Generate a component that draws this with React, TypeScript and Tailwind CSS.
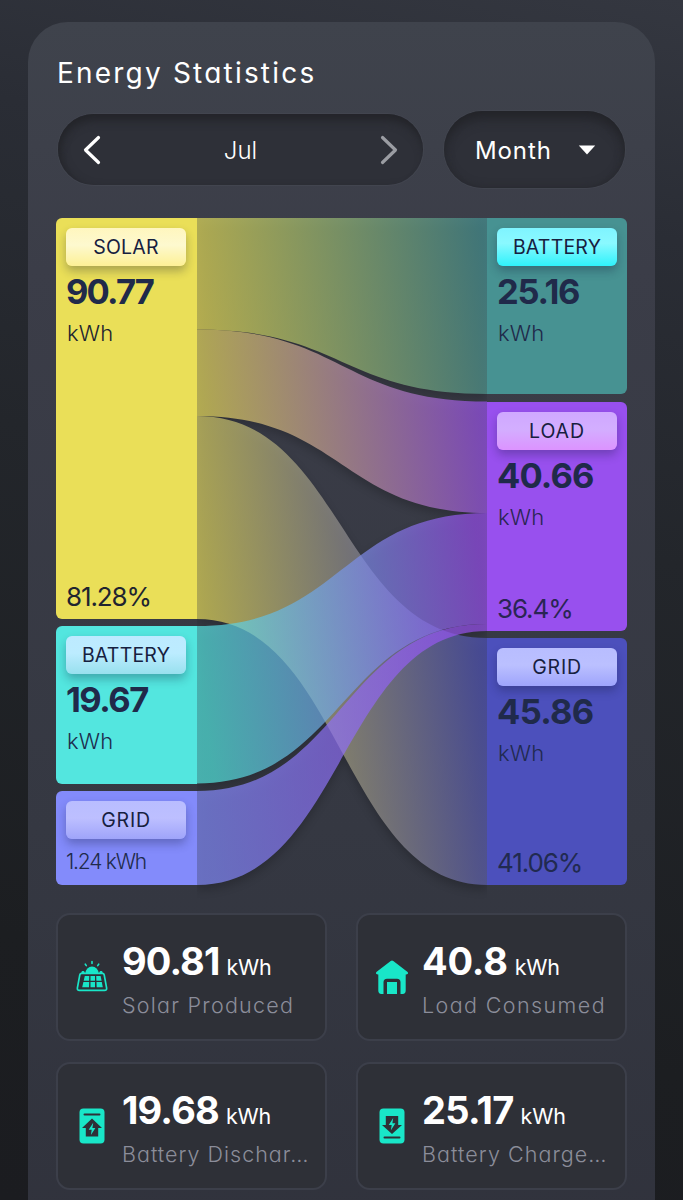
import type { ReactNode } from 'react';

type NodeProps = {
  label: string;
  value: string;
  percent?: string;
  box: string;
  badge: string;
  valueTracking: string;
  labelTracking: string;
  tone: string;
};

function Badge({ label, className, tracking }: { label: string; className: string; tracking: string }) {
  return (
    <div
      className={`flex h-[38px] w-[120px] shrink-0 items-center justify-center rounded-md pt-[2px] text-[19.5px] leading-none text-[#16203f] shadow-[0_5px_10px_rgba(20,25,60,0.3)] ${className}`}
    >
      <span className={tracking}>{label}</span>
    </div>
  );
}

function FlowNode({ label, value, percent, box, badge, valueTracking, labelTracking, tone }: NodeProps) {
  return (
    <div className={`flex flex-col overflow-hidden px-[10px] pt-[10px] ${box} ${tone}`}>
      <Badge label={label} className={badge} tracking={labelTracking} />
      <div className={`mt-[3px] h-11 text-[34.5px] leading-[46px] font-bold text-[#202a4a] ${valueTracking}`}>{value}</div>
      <div className="mt-[6px] pl-px text-[22px] leading-7 font-light tracking-[0.2px]">kWh</div>
      {percent && <div className="mt-auto mb-[7px] text-[26px] leading-[30px] tracking-[-1.1px]">{percent}</div>}
    </div>
  );
}

const LINKS = [
  { id: 'sb', from: '#eadf58', to: '#479292', l0: 0, l1: 111.5, r0: 0, r1: 176 },
  { id: 'sl', from: '#eadf58', to: '#9850ee', l0: 111.5, l1: 198, r0: 183.5, r1: 295 },
  { id: 'sg', from: '#eadf58', to: '#4c50bc', l0: 198, l1: 401, r0: 420, r1: 667 },
  { id: 'bl', from: '#53e6df', to: '#9850ee', l0: 408, l1: 565.5, r0: 295, r1: 406 },
  { id: 'gl', from: '#838bfb', to: '#9850ee', l0: 573, l1: 667, r0: 406, r1: 413 },
];

function linkPath(k: (typeof LINKS)[number]) {
  return `M0 ${k.l0}C145 ${k.l0} 145 ${k.r0} 290 ${k.r0}V${k.r1}C145 ${k.r1} 145 ${k.l1} 0 ${k.l1}Z`;
}

function linkMiddle(k: (typeof LINKS)[number]) {
  return (k.l0 + k.l1 + k.r0 + k.r1) / 4;
}

function Links() {
  return (
    <svg width="290" height="667" viewBox="0 0 290 667" className="block overflow-visible">
      <defs>
        <filter id="soft" x="-20%" y="-20%" width="140%" height="140%">
          <feGaussianBlur stdDeviation="5" />
        </filter>
        <clipPath id="between">
          <rect x="0" y="0" width="290" height="690" />
        </clipPath>
        {LINKS.map((k) => (
          <linearGradient key={k.id} id={k.id} gradientUnits="userSpaceOnUse" x1="0" y1={linkMiddle(k) + 20} x2="290" y2={linkMiddle(k) - 20}>
            <stop offset="0" stopColor={k.from} />
            <stop offset="1" stopColor={k.to} />
          </linearGradient>
        ))}
      </defs>
      <g clipPath="url(#between)">
        <g filter="url(#soft)" opacity="0.2" transform="translate(0 5)">
          {LINKS.map((k) => (
            <path key={k.id} d={linkPath(k)} fill="#000" />
          ))}
        </g>
      </g>
      {LINKS.map((k) => (
        <path key={k.id} d={linkPath(k)} fill={`url(#${k.id})`} fillOpacity="0.7" />
      ))}
    </svg>
  );
}

function SolarIcon() {
  return (
    <svg width="32" height="34" viewBox="0 0 32 34" className="text-[#19e6c8]">
      <g fill="currentColor">
        <path d="M9.500 13a6.500 6.500 0 0 1 13 0Z" />
        <rect x="5.5" y="11" width="3" height="2.500" rx="1.200" />
        <rect x="23.5" y="11" width="3" height="2.500" rx="1.200" />
        <path d="M8.800 15.900h4.500l-.2 4.800H7.700ZM14.500 15.900h4.500v4.800h-4.500ZM20.200 15.900h4.400l1 4.800h-5.200ZM7.400 22h5.800l-.2 5.300H6.200ZM14.500 22h4.500v5.300h-4.500ZM20.500 22h5.300l1 5.300h-6.100Z" />
      </g>
      <g fill="none" stroke="currentColor" strokeLinecap="round">
        <path d="M16 1.500v2M9.300 4.200l1 1.400M22.700 4.200l-1 1.400" strokeWidth="1.600" />
        <path d="M5.600 13.300h20.800q1.500 0 1.800 1.600l2.400 12.900q.4 2.500-2 2.500H3.400q-2.400 0-2-2.500l2.400-12.900q.3-1.600 1.800-1.600Z" strokeWidth="1.700" />
      </g>
    </svg>
  );
}

function HomeIcon() {
  return (
    <svg width="34" height="34" viewBox="0 0 34 34">
      <path
        d="M15.7.9q1.3-1 2.6 0L32.6 12q1.5 2.4-1.5 2.5h-.4v16q0 3.2-3 3.5h-2.2V22.300q0-3.500-3.500-3.500h-10q-3.500 0-3.500 3.500V34H6.300q-3-.3-3-3.500v-16h-.4Q-.1 14.400 1.400 12Z"
        fill="#19e6c8"
      />
      <path d="M12 22h10v12H12Z" fill="#19e6c8" />
    </svg>
  );
}

function DischargeIcon() {
  return (
    <svg width="26" height="36" viewBox="0 0 26 36">
      <rect x="0.500" y="0.500" width="25" height="35" rx="4" fill="#19e6c8" />
      <g fill="#2e3037">
        <rect x="4.500" y="5.500" width="17" height="2" rx="1" />
        <path d="M13 10.500 23 20h-3.800v8.500H6.800V20H3Z" />
      </g>
      <path d="M14.200 14.700 9.700 21.700h3l-.8 5.200 4.500-7h-3Z" fill="#19e6c8" />
    </svg>
  );
}

function ChargeIcon() {
  return (
    <svg width="26" height="36" viewBox="0 0 26 36">
      <rect x="0.500" y="0.500" width="25" height="35" rx="4" fill="#19e6c8" />
      <g fill="#2e3037">
        <rect x="4.500" y="28.500" width="17" height="2" rx="1" />
        <path d="M13 26 3 17h3.800V8h12.400v9H23Z" />
      </g>
      <path d="M14.200 10 9.700 17h3l-.8 5.200 4.500-7h-3Z" fill="#19e6c8" />
    </svg>
  );
}

function Stat({ icon, value, label, tracking, labelTracking }: { icon: ReactNode; value: string; label: string; tracking: string; labelTracking: string }) {
  return (
    <div className="flex h-32 items-center rounded-[14px] border-2 border-[#3c3f4a] bg-[#2e3037] pl-[14px]">
      <div className="flex w-10 shrink-0 items-center justify-center">{icon}</div>
      <div className="ml-[10px] pt-[6px] whitespace-nowrap">
        <div className="flex h-11 items-baseline gap-[7px] leading-[44px] text-white">
          <span className={`text-[38px] font-bold ${tracking}`}>{value}</span>
          <span className="text-[21.500px] tracking-[-0.2px]">kWh</span>
        </div>
        <div className={`mt-[5px] text-[21.500px] leading-[34px] font-light text-[#8b8d9a] ${labelTracking}`}>{label}</div>
      </div>
    </div>
  );
}

export default function App() {
  return (
    <div className="h-[1200px] w-[683px] overflow-hidden bg-[linear-gradient(192deg,#343740_0%,#2a2d35_18%,#23262b_42%,#1c1e21_80%,#1b1c20_100%)] px-7 pt-[22px] font-['Inter','Liberation_Sans',sans-serif] [font-feature-settings:'cv11'] [font-variant-ligatures:none]">
      <main className="h-[1240px] w-[627px] rounded-[40px] bg-[linear-gradient(180deg,#3f434c_0%,#3b3d48_20%,#353842_65%,#30323c_100%)] px-7 pt-[34px]">
        <h1 className="pl-px text-[28px] leading-[34px] font-normal tracking-[2.200px] text-white">Energy Statistics</h1>

        <div className="mt-[21px] flex h-[77px] items-center gap-[21px] pl-[2px]">
          <div className="flex h-[71px] w-[365px] items-center justify-between rounded-full bg-[#2e3038] pr-[25px] pl-[25px] shadow-[inset_0_9px_10px_-3px_#232429,inset_6px_0_8px_-4px_#25262b,0_0_0_1px_#42454f]">
            <svg width="18" height="30" viewBox="0 0 18 30" fill="none" stroke="#fff" strokeWidth="3.200" strokeLinecap="round" strokeLinejoin="round">
              <path d="M15.500 2.500 2.500 15l13 12.500" />
            </svg>
            <span className="pt-[3px] text-[24px] leading-none font-light text-white">Jul</span>
            <svg width="18" height="30" viewBox="0 0 18 30" fill="none" stroke="#9b9da3" strokeWidth="3.200" strokeLinecap="round" strokeLinejoin="round">
              <path d="m2.500 2.500 13 12.500-13 12.500" />
            </svg>
          </div>
          <div className="flex h-[77px] w-[181px] items-center justify-between rounded-full bg-[#2e3038] pr-[29px] pl-[31px] shadow-[inset_0_10px_12px_-3px_#232429,inset_0_0_8px_#28292f,0_0_0_1px_#42454f]">
            <span className="pt-[3px] text-[24px] leading-none tracking-[0.900px] text-white">Month</span>
            <svg width="18" height="10" viewBox="0 0 18 10">
              <path d="M.8.500h16.400L9 9.500Z" fill="#fff" />
            </svg>
          </div>
        </div>

        <section className="mt-[30px] grid h-[667px] grid-cols-[141px_290px_140px]">
          <div className="flex flex-col gap-[7px]">
            <FlowNode label="SOLAR" value="90.77" percent="81.28%" box="h-[401px] rounded-l-md" tone="bg-[#eadf58] text-[#20242f]" badge="bg-[linear-gradient(#fff6be,#fdf9cf_45%,#fdf095)]" valueTracking="tracking-[-1.800px]" labelTracking="tracking-[0.200px]" />
            <FlowNode label="BATTERY" value="19.67" box="h-[158px] rounded-l-md" tone="bg-[#53e6df] text-[#1d2d4e]" badge="bg-[linear-gradient(#bdeaff,#bcecff_45%,#98e0ee)]" valueTracking="tracking-[-1.500px]" labelTracking="tracking-[0.200px]" />
            <div className="flex h-[94px] flex-col rounded-l-md bg-[#838bfb] px-[10px] pt-[10px]">
              <Badge label="GRID" className="bg-[linear-gradient(#b9bdff,#bdbfff_45%,#9fa4fa)]" tracking="tracking-[0.800px]" />
              <div className="mt-[9px] text-[21px] leading-7 font-light tracking-[-1.200px] whitespace-nowrap text-[#202a4a]">1.24 kWh</div>
            </div>
          </div>
          <div className="relative">
            <Links />
          </div>
          <div className="flex flex-col">
            <FlowNode label="BATTERY" value="25.16" box="h-[176px] rounded-r-md" tone="bg-[#479292] text-[#202a4a]" badge="bg-[linear-gradient(#7ff4ff,#8af9ff_40%,#2ff2fb)]" valueTracking="tracking-[-1.300px]" labelTracking="tracking-[0.200px]" />
            <div className="h-[7.500px] shrink-0" />
            <FlowNode label="LOAD" value="40.66" percent="36.4%" box="h-[229.500px] rounded-r-md" tone="bg-[#9850ee] text-[#2a2554]" badge="bg-[linear-gradient(#cfa8ff,#d3aeff_45%,#dc93ff)]" valueTracking="tracking-[-0.900px]" labelTracking="tracking-[0.900px]" />
            <div className="h-[7px] shrink-0" />
            <FlowNode label="GRID" value="45.86" percent="41.06%" box="h-[247px] rounded-r-md" tone="bg-[#4c50bc] text-[#212a50]" badge="bg-[linear-gradient(#b8bdff,#bbc0ff_45%,#9ea4fc)]" valueTracking="tracking-[-0.700px]" labelTracking="tracking-[0.800px]" />
          </div>
        </section>

        <section className="mt-7 grid grid-cols-2 gap-x-[29px] gap-y-[21px]">
          <Stat icon={<SolarIcon />} value="90.81" label="Solar Produced" tracking="tracking-[-0.900px]" labelTracking="tracking-[1.250px]" />
          <Stat icon={<HomeIcon />} value="40.8" label="Load Consumed" tracking="tracking-[-0.200px]" labelTracking="tracking-[1.400px]" />
          <Stat icon={<DischargeIcon />} value="19.68" label="Battery Dischar…" tracking="tracking-[-0.800px]" labelTracking="tracking-[1px]" />
          <Stat icon={<ChargeIcon />} value="25.17" label="Battery Charge…" tracking="tracking-[-0.700px]" labelTracking="tracking-[1.050px]" />
        </section>
      </main>
    </div>
  );
}
